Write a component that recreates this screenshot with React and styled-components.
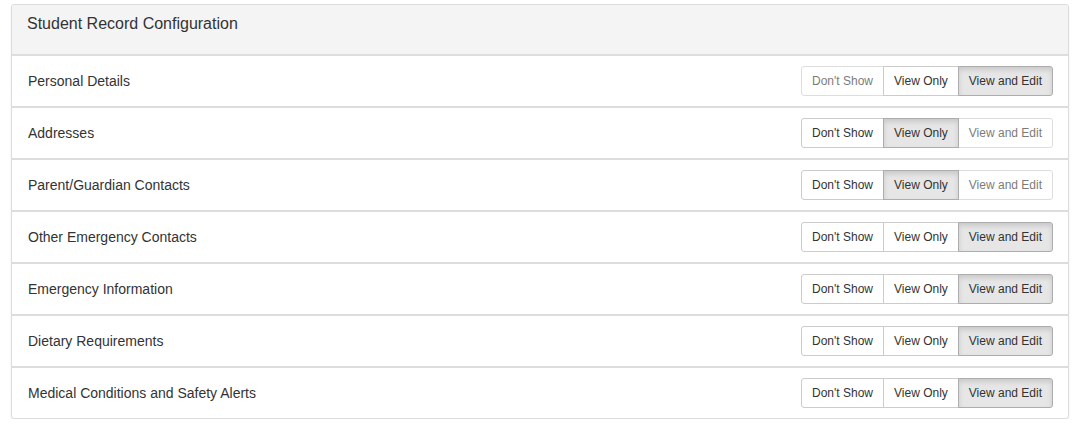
import React from "react";
import styled, { createGlobalStyle, css } from "styled-components";

const Global = createGlobalStyle`
  html, body { margin: 0; padding: 0; background: #fff; }
  body { font-family: "Liberation Sans", Arial, sans-serif; color: #333; }
  * { box-sizing: border-box; }
`;

const Page = styled.div`
  padding: 4px 8px 0 11px;
`;

const Panel = styled.section`
  border: 1px solid #dcdcdc;
  border-radius: 3px;
  background: #fff;
  box-shadow: 0 1px 2px rgba(0, 0, 0, 0.08);
  overflow: hidden;
`;

const Heading = styled.header`
  height: 51px;
  padding: 10px 15px 0 15px;
  background: #f4f4f4;
  border-bottom: 2px solid #dddddd;
`;

const Title = styled.h3`
  margin: 0;
  font-size: 16px;
  font-weight: normal;
  line-height: 18px;
  color: #333;
`;

const Row = styled.div`
  display: flex;
  align-items: center;
  justify-content: space-between;
  height: 52px;
  padding: 0 15px 0 16px;
  border-top: ${(p) => (p.$first ? "none" : "2px solid #dddddd")};
  ${(p) => p.$first && css`height: 50px;`}
`;

const Label = styled.span`
  font-size: 14px;
  color: #333;
`;

const Group = styled.div`
  display: flex;
`;

const Btn = styled.button`
  font-family: "Liberation Sans", Arial, sans-serif;
  font-size: 12px;
  line-height: 18px;
  height: 30px;
  padding: 5px 10px;
  margin-left: -1px;
  background: #fff;
  color: #333;
  border: 1px solid #ccc;
  border-radius: 0;
  cursor: pointer;
  position: relative;
  &:first-child {
    margin-left: 0;
    border-radius: 3px 0 0 3px;
  }
  &:last-child {
    border-radius: 0 3px 3px 0;
  }
  ${(p) =>
    p.$active &&
    css`
      background: #e6e6e6;
      border-color: #adadad;
      box-shadow: inset 0 3px 5px rgba(0, 0, 0, 0.125);
      z-index: 2;
    `}
  ${(p) =>
    p.$disabled &&
    css`
      opacity: 0.65;
      cursor: not-allowed;
    `}
`;

const options = ["Don't Show", "View Only", "View and Edit"];

const rows = [
  { label: "Personal Details", active: 2, disabled: [0] },
  { label: "Addresses", active: 1, disabled: [2] },
  { label: "Parent/Guardian Contacts", active: 1, disabled: [2] },
  { label: "Other Emergency Contacts", active: 2, disabled: [] },
  { label: "Emergency Information", active: 2, disabled: [] },
  { label: "Dietary Requirements", active: 2, disabled: [] },
  { label: "Medical Conditions and Safety Alerts", active: 2, disabled: [] },
];

export default function App() {
  return (
    <Page>
      <Global />
      <Panel>
        <Heading>
          <Title>Student Record Configuration</Title>
        </Heading>
        {rows.map((r, i) => (
          <Row key={r.label} $first={i === 0}>
            <Label>{r.label}</Label>
            <Group>
              {options.map((o, j) => (
                <Btn
                  key={o}
                  $active={r.active === j}
                  $disabled={r.disabled.includes(j)}
                >
                  {o}
                </Btn>
              ))}
            </Group>
          </Row>
        ))}
      </Panel>
    </Page>
  );
}
